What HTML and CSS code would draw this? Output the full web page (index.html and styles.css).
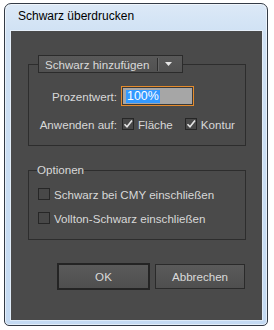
FILE: index.html
```html
<!DOCTYPE html>
<html lang="de">
<head>
<meta charset="utf-8">
<link rel="stylesheet" href="styles.css">
</head>
<body>
<div class="window">
  <div class="titlebar">Schwarz überdrucken</div>
  <div class="content">
    <fieldset class="group group-main">
      <legend class="dropdown">
        <span class="dropdown-label">Schwarz hinzufügen</span>
        <span class="dropdown-sep"></span>
        <svg class="dropdown-arrow" width="7" height="4" viewBox="0 0 7 4"><path d="M0 0H7L3.5 4Z" fill="#e6e6e6"/></svg>
      </legend>
      <div class="form-grid">
        <span class="label">Prozentwert:</span>
        <span class="input"><span class="sel">100%</span></span>
        <span class="label">Anwenden auf:</span>
        <span class="checks">
          <span class="check-item">
            <span class="box"><svg width="10" height="10" viewBox="0 0 10 10"><path d="M1.5 5.2L4 7.8L9 1.5" fill="none" stroke="#e4e4e4" stroke-width="1.6"/></svg></span>
            <span>Fläche</span>
          </span>
          <span class="check-item">
            <span class="box"><svg width="10" height="10" viewBox="0 0 10 10"><path d="M1.5 5.2L4 7.8L9 1.5" fill="none" stroke="#e4e4e4" stroke-width="1.6"/></svg></span>
            <span>Kontur</span>
          </span>
        </span>
      </div>
    </fieldset>

    <fieldset class="group group-opts">
      <legend class="legend-text">Optionen</legend>
      <div class="opt-row"><span class="box"></span><span>Schwarz bei CMY einschließen</span></div>
      <div class="opt-row"><span class="box"></span><span>Vollton-Schwarz einschließen</span></div>
    </fieldset>

    <div class="buttons">
      <button class="btn btn-default">OK</button>
      <button class="btn">Abbrechen</button>
    </div>
  </div>
</div>
</body>
</html>
```

FILE: styles.css
```css
html, body {
  margin: 0;
  padding: 0;
  background: #ffffff;
}
body {
  font-family: "Liberation Sans", Arial, sans-serif;
  font-size: 11.6px;
}
.window {
  margin: 3px 0 0 4px;
  width: 264px;
  height: 323px;
  box-sizing: border-box;
  border: 1px solid #333b46;
  border-radius: 7px 7px 5px 5px;
  background: linear-gradient(180deg, #dce9f7 0px, #cfe1f4 30px, #c4daf2 100%);
  padding: 0 5px 5px 6px;
  display: flex;
  flex-direction: column;
  box-shadow: inset 0 0 0 1px rgba(255,255,255,0.55);
}
.titlebar {
  height: 27px;
  line-height: 25px;
  padding-left: 7px;
  font-size: 12px;
  color: #000;
}
.content {
  flex: 1;
  background: #4a4a4a;
  box-shadow: 0 0 0 1px rgba(255,255,255,0.45);
  color: #d8d8d8;
  display: flex;
  flex-direction: column;
}
.group {
  margin: 0 0 0 17px;
  width: 218px;
  box-sizing: border-box;
  border: 1px solid #2d2d2d;
  min-inline-size: 0;
}
.group-main {
  margin-top: 24px;
  padding: 0 9px 14px 9px;
}
.dropdown {
  padding: 0;
  width: 145px;
  height: 18px;
  box-sizing: border-box;
  border: 1px solid #2b2b2b;
  background: linear-gradient(180deg, #595959, #515151);
  display: flex;
  align-items: center;
  color: #dadada;
}
.dropdown-label {
  padding-left: 6px;
  width: 118px;
  box-sizing: border-box;
  white-space: nowrap;
}
.dropdown-sep {
  width: 1px;
  height: 13px;
  background: #2e2e2e;
  box-shadow: 1px 0 0 #666;
}
.dropdown-arrow {
  margin-left: 7px;
}
.form-grid {
  margin-top: 13px;
  display: grid;
  grid-template-columns: 79px auto;
  column-gap: 4px;
  row-gap: 11px;
  align-items: center;
}
.label {
  text-align: right;
  white-space: nowrap;
}
.input {
  width: 73px;
  height: 20px;
  box-sizing: border-box;
  border: 1px solid #e58b2b;
  background: #a6a6a6;
  box-shadow: inset 0 0 0 1px #3a3a3a;
  display: flex;
  align-items: center;
  padding-left: 4px;
}
.sel {
  background: #3399ff;
  color: #ffffff;
  font-size: 12.4px;
  line-height: 13px;
  padding: 0 1px;
}
.checks {
  display: flex;
  align-items: center;
  margin-left: 1px;
  height: 14px;
}
.check-item {
  display: flex;
  align-items: center;
  gap: 4px;
  margin-right: 12px;
}
.box {
  width: 12px;
  height: 12px;
  box-sizing: border-box;
  border: 1px solid #262626;
  background: #484848;
  display: inline-flex;
  align-items: center;
  justify-content: center;
  flex: none;
}
.group-opts {
  margin-top: 17px;
  padding: 0 9px 14px 8px;
}
.legend-text {
  padding: 0;
  line-height: 14px;
  height: 14px;
}
.opt-row {
  display: flex;
  align-items: center;
  gap: 4px;
  height: 14px;
  margin-left: 1px;
  margin-top: 10px;
  white-space: nowrap;
}
.buttons {
  margin-top: 23px;
  padding-right: 17px;
  display: flex;
  justify-content: flex-end;
  align-items: center;
  gap: 5px;
}
.btn {
  font-family: "Liberation Sans", Arial, sans-serif;
  font-size: 11.6px;
  color: #dadada;
  width: 90px;
  height: 25px;
  box-sizing: border-box;
  border: 1px solid #2a2a2a;
  background: linear-gradient(180deg, #5a5a5a, #4f4f4f);
  padding: 0;
  border-radius: 0;
}
.btn-default {
  width: 93px;
  height: 27px;
  border: 2px solid #242424;
}
```
